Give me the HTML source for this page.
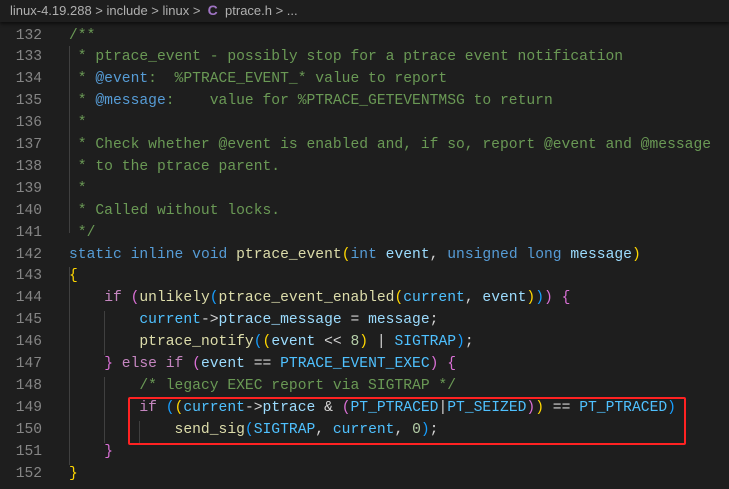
<!DOCTYPE html>
<html><head><meta charset="utf-8"><style>
html,body{margin:0;padding:0;background:#1e1e1e;width:729px;height:489px;overflow:hidden}
.bc{position:absolute;left:0;top:0;width:729px;height:22px;background:#1e1e1e;box-shadow:0 2px 3px rgba(0,0,0,.55);font-family:"Liberation Sans",sans-serif;font-size:13px;color:#b0b0b0;line-height:20px;padding-left:10px;box-sizing:border-box;white-space:pre}
.bc .c{color:#a074c4;font-weight:bold;font-size:14px}
.ln{position:absolute;left:0;width:42px;text-align:right;color:#858585;font-family:"Liberation Mono",monospace;font-size:14.6px;line-height:22px}
.cd{position:absolute;left:69px;color:#d4d4d4;font-family:"Liberation Mono",monospace;font-size:14.66px;line-height:22px;white-space:pre}
.g{position:absolute;width:1px;background:#404040}
.cm{color:#6a9955}.tg{color:#569cd6}.kw{color:#569cd6}.cf{color:#c586c0}.fn{color:#dcdcaa}.v{color:#9cdcfe}.m{color:#4fc1ff}.n{color:#b5cea8}
.b1{color:#ffd700}.b2{color:#da70d6}.b3{color:#179fff}
.box{position:absolute;left:128px;top:397px;width:554px;height:44px;border:2.5px solid #f22;border-radius:2px}
</style></head><body>
<div class="bc">linux-4.19.288 &gt; include &gt; linux &gt;  <span class="c">C</span>  ptrace.h &gt; ...</div>
<div class="g" style="left:69px;top:46px;height:187px"></div>
<div class="g" style="left:69px;top:267px;height:198px"></div>
<div class="g" style="left:104px;top:311px;height:44px"></div>
<div class="g" style="left:104px;top:377px;height:66px"></div>
<div class="g" style="left:139px;top:421px;height:22px"></div>
<div id="c"></div>
<div class="box"></div>
<script>
var L=[
'<span class="cm">/**</span>',
'<span class="cm"> * ptrace_event - possibly stop for a ptrace event notification</span>',
'<span class="cm"> * </span><span class="tg">@event</span><span class="cm">:  %PTRACE_EVENT_* value to report</span>',
'<span class="cm"> * </span><span class="tg">@message</span><span class="cm">:    value for %PTRACE_GETEVENTMSG to return</span>',
'<span class="cm"> *</span>',
'<span class="cm"> * Check whether @event is enabled and, if so, report @event and @message</span>',
'<span class="cm"> * to the ptrace parent.</span>',
'<span class="cm"> *</span>',
'<span class="cm"> * Called without locks.</span>',
'<span class="cm"> */</span>',
'<span class="kw">static</span> <span class="kw">inline</span> <span class="kw">void</span> <span class="fn">ptrace_event</span><span class="b1">(</span><span class="kw">int</span> <span class="v">event</span>, <span class="kw">unsigned</span> <span class="kw">long</span> <span class="v">message</span><span class="b1">)</span>',
'<span class="b1">{</span>',
'    <span class="cf">if</span> <span class="b2">(</span><span class="fn">unlikely</span><span class="b3">(</span><span class="fn">ptrace_event_enabled</span><span class="b1">(</span><span class="m">current</span>, <span class="v">event</span><span class="b1">)</span><span class="b3">)</span><span class="b2">)</span> <span class="b2">{</span>',
'        <span class="m">current</span>-&gt;<span class="v">ptrace_message</span> = <span class="v">message</span>;',
'        <span class="fn">ptrace_notify</span><span class="b3">(</span><span class="b1">(</span><span class="v">event</span> &lt;&lt; <span class="n">8</span><span class="b1">)</span> | <span class="m">SIGTRAP</span><span class="b3">)</span>;',
'    <span class="b2">}</span> <span class="cf">else</span> <span class="cf">if</span> <span class="b2">(</span><span class="v">event</span> == <span class="m">PTRACE_EVENT_EXEC</span><span class="b2">)</span> <span class="b2">{</span>',
'        <span class="cm">/* legacy EXEC report via SIGTRAP */</span>',
'        <span class="cf">if</span> <span class="b3">(</span><span class="b1">(</span><span class="m">current</span>-&gt;<span class="v">ptrace</span> &amp; <span class="b2">(</span><span class="m">PT_PTRACED</span>|<span class="m">PT_SEIZED</span><span class="b2">)</span><span class="b1">)</span> == <span class="m">PT_PTRACED</span><span class="b3">)</span>',
'            <span class="fn">send_sig</span><span class="b3">(</span><span class="m">SIGTRAP</span>, <span class="m">current</span>, <span class="n">0</span><span class="b3">)</span>;',
'    <span class="b2">}</span>',
'<span class="b1">}</span>'];
var h='';for(var i=0;i<L.length;i++){var t=24.5+i*21.9;h+='<div class="ln" style="top:'+t+'px">'+(132+i)+'</div><div class="cd" style="top:'+t+'px">'+L[i]+'</div>';}
document.getElementById('c').innerHTML=h;
</script>
</body></html>
